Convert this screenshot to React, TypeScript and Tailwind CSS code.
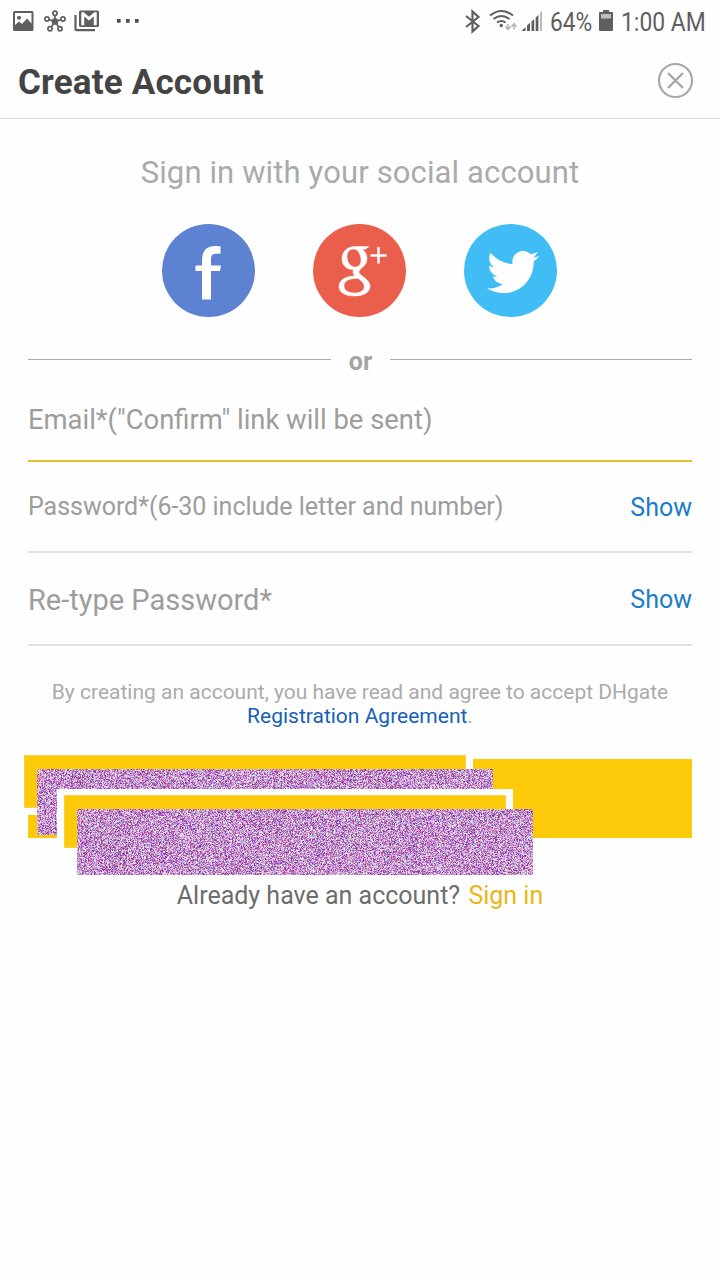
import { useEffect, useRef } from "react";
import { FaTwitter } from "react-icons/fa";

function StatusBar() {
  return (
    <div className="flex h-11 shrink-0 items-center justify-between pl-3 pr-[15px] text-[#5f5f5f]">
      <svg width="130" height="44" viewBox="12 0 130 44" fill="none">
        <path fill="currentColor" fillRule="evenodd" d="M14.500 11h17.500a1.500 1.500 0 0 1 1.500 1.500V29.500a1.500 1.500 0 0 1-1.500 1.500H14.500a1.500 1.500 0 0 1-1.500-1.500V12.500a1.500 1.500 0 0 1 1.500-1.500zM15 13v12l4-3.500 3 2.500 5-5.500 4.500 5V13z" />
        <circle cx="19" cy="17.800" r="2" fill="currentColor" />
        <g stroke="currentColor" strokeWidth="1.700">
          <path d="M55 21.500V15M55 21.500l-6.500-2M55 21.500l6.500-2M55 21.500l-4 6M55 21.500l4 6" />
          <g fill="#fff">
            <circle cx="55" cy="13.300" r="2.100" />
            <circle cx="47" cy="19" r="2.100" />
            <circle cx="63" cy="19" r="2.100" />
            <circle cx="50" cy="28.700" r="2.100" />
            <circle cx="60" cy="28.700" r="2.100" />
          </g>
          <circle cx="55" cy="21.500" r="2.500" fill="currentColor" />
        </g>
        <path d="M75.500 15v14.200a1 1 0 0 0 1 1H95" stroke="currentColor" strokeWidth="2.200" />
        <rect x="79" y="10.500" width="20" height="16.500" rx="1.500" fill="currentColor" />
        <path d="M81.300 12.300h2.400L89 16.800l5.300-4.500h2.400v12.900h-2.900V16.500L89 20.500l-4.800-4v8.700h-2.900z" fill="#fff" />
        <path d="M117 19h3.600v3.800H117zM126 19h3.600v3.800H126zM135 19h3.600v3.800H135z" fill="#4c4c4c" />
      </svg>
      <div className="flex h-11 items-center">
        <svg width="82" height="44" viewBox="462 0 82 44" fill="none" stroke="currentColor">
          <path d="M466 16l12.500 10-6 5.500V11.500l6 5.500L466 27" strokeWidth="2.200" />
          <g strokeWidth="2">
            <path d="M490 15.500q11.500-9 23 0" />
            <path d="M493.500 19q8-6 16 0" />
            <path d="M497 22.500q4.500-3 8.500 0" />
          </g>
          <circle cx="501.300" cy="25.500" r="1.700" fill="currentColor" stroke="none" />
          <path d="M508 24v5m-2.500-2.500l2.500 3 2.500-3M514 29.500v-5m-2.500 2.200l2.500-3 2.500 3" stroke="#b4b4b4" strokeWidth="1.500" />
          <path d="M521.500 31l4-4v4zM527 25.500l3-2.700V31h-3zM531.500 21.500l2.700-2.500v12h-2.700zM535.700 17.500l2.700-2.500v16h-2.700z" fill="currentColor" stroke="none" />
          <path d="M540 13l2-2v20h-2z" fill="#b9b9b9" stroke="none" />
        </svg>
        <span className="ml-[6px] block w-[42px] whitespace-nowrap text-[26px] leading-[44px]">
          <span className="inline-block origin-left scale-x-[0.875]">64%</span>
        </span>
        <svg className="ml-[6px]" width="16" height="44" viewBox="598 0 16 44">
          <path d="M603 10h6v2h3a1 1 0 0 1 1 1v17a1 1 0 0 1-1 1h-12a1 1 0 0 1-1-1V13a1 1 0 0 1 1-1h3z" fill="#5f5f5f" />
          <path d="M601 14h10v4.500h-10z" fill="#bdbdbd" />
        </svg>
        <span className="ml-[7px] block w-[84px] whitespace-nowrap text-[26px] leading-[44px]">
          <span className="inline-block origin-left scale-x-[0.88]">1:00 AM</span>
        </span>
      </div>
    </div>
  );
}

function NoisePanel({ seed, className }: { seed: number; className: string }) {
  const ref = useRef<HTMLCanvasElement>(null);
  useEffect(() => {
    const ctx = ref.current?.getContext("2d");
    if (!ctx) return;
    const image = ctx.createImageData(456, 66);
    let state = seed;
    const random = () => {
      state = (state + 0x6d2b79f5) | 0;
      let t = Math.imul(state ^ (state >>> 15), 1 | state);
      t = (t + Math.imul(t ^ (t >>> 7), 61 | t)) ^ t;
      return ((t ^ (t >>> 14)) >>> 0) / 4294967296;
    };
    for (let i = 0; i < image.data.length; i += 4) {
      const light = Math.pow(random(), 0.75);
      image.data[i] = 105 + 165 * (0.55 * light + 0.45 * random());
      image.data[i + 1] = 35 + 230 * light * (0.7 + 0.3 * random());
      image.data[i + 2] = 120 + 155 * (0.55 * light + 0.45 * random());
      image.data[i + 3] = 255;
    }
    ctx.putImageData(image, 0, 0);
  }, [seed]);
  return <canvas ref={ref} width={456} height={66} className={className} />;
}

function SocialButtons() {
  return (
    <div className="mt-[31px] flex justify-center gap-[58px] pr-[2px]">
      <button aria-label="Facebook" className="size-[93px] rounded-full bg-[#5c82d1]">
        <svg width="93" height="93" viewBox="162 224 93 93" fill="#fff">
          <path d="M202 299.500V271h-6.500v-5.500h6.500v-5c0-9.500 4.500-14.500 13-14.500 2.300 0 4 .2 5.500.5v7.300h-4.500c-3.700 0-5 1.700-5 5.500v6.200H221l-1 5.500h-9v28.500z" />
        </svg>
      </button>
      <button aria-label="Google+" className="size-[93px] rounded-full bg-[#ea5f4b]">
        <svg width="93" height="93" viewBox="313 224 93 93" fill="#fff" stroke="#fff" strokeWidth="0.500">
          <path fillRule="evenodd" d="M355 246.500h14l-3.500 2.700h-3.500c3.500 2.500 5 5.500 5 9.300 0 4-2 7-5 9.300-2.500 2-3 3-3 4.200 0 1.500 1.200 2.500 3.500 4.200 5 3.600 7.500 6.300 7.500 10 0 6-6 9.800-15.500 9.800-9 0-15.500-3.300-15.500-9.500 0-6.500 7-10.300 16-10.700-2-2.200-2.500-4-1.500-6.300-7 .3-11.500-4.300-11.500-10.700 0-7.300 5.500-12.300 13-12.300zM353.500 249c-4 0-6.500 3-6.500 7.500 0 5.500 3.500 10.500 8 10.500 4 0 6-2.500 6-6.800 0-5.700-3-11.200-7.500-11.200zM356.500 278.500c-8 0-12.500 2.700-12.500 7.300 0 4.500 4 7.200 10.500 7.200 6 0 9.700-2.500 9.700-6.500 0-3-2-5-5.700-7.900z" />
          <path stroke="none" d="M377.300 247h2.400v7.300h7v2.400h-7v6.800h-2.400v-6.800h-6.800v-2.400h6.800z" />
        </svg>
      </button>
      <button aria-label="Twitter" className="flex size-[93px] items-center justify-center rounded-full bg-[#40bdf4] text-white">
        <FaTwitter className="ml-[5px] mt-[3px] size-[52px]" />
      </button>
    </div>
  );
}

export default function App() {
  return (
    <main className="flex h-[1280px] w-[720px] flex-col overflow-hidden bg-[#fefefe] font-['Roboto',sans-serif]">
      <StatusBar />
      <header className="flex h-[75px] shrink-0 items-center justify-between border-b border-[#dddfdf] pl-[18px] pr-[26px]">
        <h1 className="pt-[3px] text-[35px] font-bold leading-[71px] tracking-[0.18px] text-[#444]">Create Account</h1>
        <button aria-label="Close" className="mb-[2px] text-[#a5a8aa]">
          <svg width="37" height="37" viewBox="0 0 37 37" fill="none" stroke="currentColor" strokeWidth="2.200">
            <circle cx="18.500" cy="18.500" r="16.500" />
            <path d="M11 11l15 15M26 11L11 26" strokeWidth="2.400" />
          </svg>
        </button>
      </header>

      <section className="flex flex-col px-7">
        <p className="mt-[34px] text-center text-[31px] leading-[40px] tracking-[0.13px] text-[#aaa]">Sign in with your social account</p>
        <SocialButtons />
        <div className="mt-[29px] flex h-[30px] items-center">
          <span className="mb-[4px] h-px w-[303px] bg-[#aaa]" />
          <span className="flex-1 pt-[1px] text-center text-[25px] font-bold leading-[30px] text-[#a5a5a5]">or</span>
          <span className="mb-[4px] h-px w-[302px] bg-[#aaa]" />
        </div>
        <div className="flex h-[86px] items-center border-b-2 border-[#e4c02c] pt-[5px] text-[27.4px] text-[#9d9d9d]">
          <span>Email*("Confirm" link will be sent)</span>
        </div>
        <div className="flex h-[91px] items-center justify-between border-b-2 border-[#e2e2e2] text-[25px] text-[#9d9d9d]">
          <span className="tracking-[-0.03px]">Password*(6-30 include letter and number)</span>
          <button className="pt-[2px] text-[25px] text-[#1a7dcb]">Show</button>
        </div>
        <div className="flex h-[93px] items-center justify-between border-b-2 border-[#e2e2e2] text-[29px] text-[#9d9d9d]">
          <span className="pt-[4px]">Re-type Password*</span>
          <button className="pt-[2px] text-[25px] text-[#1a7dcb]">Show</button>
        </div>
        <p className="mt-[34px] whitespace-nowrap text-center text-[21px] leading-6 text-[#ababab]">
          By creating an account, you have read and agree to accept DHgate
          <br />
          <a className="text-[#1660b8]">Registration Agreement</a>.
        </p>
      </section>

      <div className="relative mx-7 mt-[31px] h-[79px] shrink-0 bg-[#fdca09]">
        <div className="absolute left-[-11px] top-[-10px] h-[66px] w-[456px] bg-[#fefefe] pl-[7px] pt-[6px]">
          <div className="h-[53px] w-[442px] border border-[#f7cf43] bg-[#fdca09]" />
        </div>
        <NoisePanel seed={4831} className="absolute left-[9px] top-[10px]" />
        <div className="absolute left-[29px] top-[30px] h-[66px] w-[456px] bg-[#fefefe] pl-[7px] pt-[6px]">
          <div className="h-[53px] w-[442px] border border-[#f7cf43] bg-[#fdca09]" />
        </div>
        <NoisePanel seed={9277} className="absolute left-[49px] top-[50px]" />
      </div>
      <p className="mt-[42px] text-center text-[25px] leading-[32px] text-[#6d6d6d]">
        Already have an account? <a className="ml-[2px] text-[#eab714]">Sign in</a>
      </p>
    </main>
  );
}
